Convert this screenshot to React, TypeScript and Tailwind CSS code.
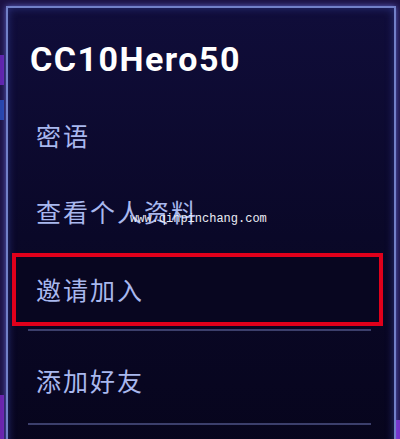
import React from "react";

export default function App() {
  const cjk = { fontFamily: '"Noto Sans CJK SC", "Noto Sans", sans-serif' };
  return (
    <div className="w-[400px] h-[439px] overflow-hidden bg-[#1c1244] pt-[6px] pl-[6px] pr-[4px] relative">
      <div className="absolute left-0 top-[55px] w-[4px] h-[30px] bg-[#7a2bd6] opacity-70" />
      <div className="absolute left-0 top-[100px] w-[4px] h-[20px] bg-[#2b5ad6] opacity-70" />
      <div className="absolute left-0 top-[395px] w-[4px] h-[44px] bg-[#8a2bd6] opacity-70" />
      <div className="absolute right-0 top-[420px] w-[4px] h-[19px] bg-[#8a3be6] opacity-80" />
      <div
        className="h-[460px] border-2 border-[#7280c8] bg-gradient-to-b from-[#100d3a] via-[#0a0828] to-[#07051c] shadow-[0_0_6px_#5a5fc0,inset_0_0_8px_#2a2f7a] flex flex-col"
      >
        <div className="h-[102px] flex items-center pl-[22px]">
          <span
            className="text-white font-bold text-[34px] leading-none tracking-[1.5px]"
            style={{ fontFamily: 'Roboto, "Noto Sans", sans-serif' }}
          >
            CC10Hero50
          </span>
        </div>
        <div className="h-[50px] flex items-center pl-[28px]">
          <span className="text-[#a9b8ee] text-[25px] leading-none tracking-[2px]" style={cjk}>
            密语
          </span>
        </div>
        <div className="h-[50px] mt-[26px] flex items-center pl-[28px] relative">
          <span className="text-[#a9b8ee] text-[25px] leading-none tracking-[2px]" style={cjk}>
            查看个人资料
          </span>
          <span
            className="absolute left-[122px] top-[27px] text-[12px] leading-none text-[#ececf4]"
            style={{ fontFamily: '"Liberation Mono", monospace' }}
          >
            www.qinpinchang.com
          </span>
        </div>
        <div className="h-[73px] mt-[17px] ml-[4px] mr-[11px] border-4 border-[#e0001b] bg-[#080620] flex items-center pl-[20px]">
          <span className="text-[#a9b8ee] text-[25px] leading-none tracking-[2px]" style={cjk}>
            邀请加入
          </span>
        </div>
        <div className="h-[2px] mt-[3px] ml-[20px] mr-[23px] bg-[#3c3f6c]" />
        <div className="h-[50px] mt-[24px] flex items-center pl-[28px]">
          <span className="text-[#a9b8ee] text-[25px] leading-none tracking-[2px]" style={cjk}>
            添加好友
          </span>
        </div>
        <div className="h-[2px] mt-[18px] ml-[20px] mr-[23px] bg-[#3c3f6c]" />
      </div>
    </div>
  );
}
